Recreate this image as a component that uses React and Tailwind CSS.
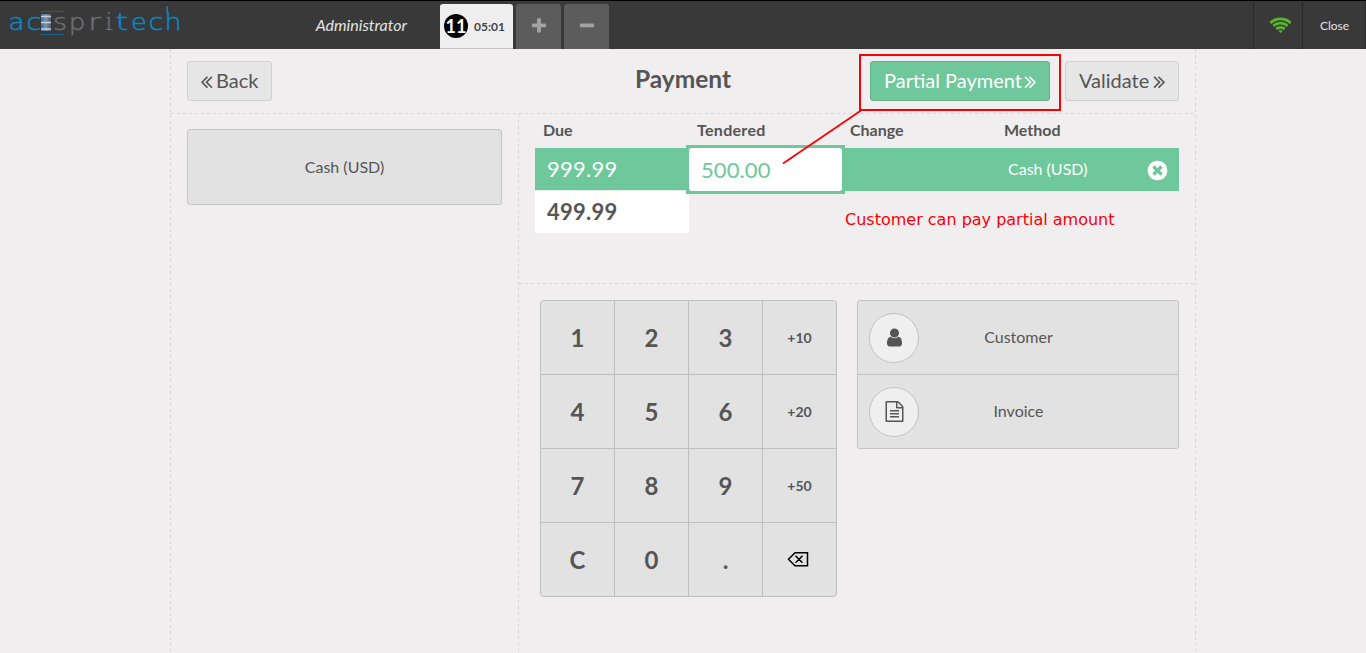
import React from "react";

const ICONS = {
  left: "M1011 1376q0 13-10 23l-50 50q-10 10-23 10t-23-10l-466-466q-10-10-10-23t10-23l466-466q10-10 23-10t23 10l50 50q10 10 10 23t-10 23l-393 393 393 393q10 10 10 23zm384 0q0 13-10 23l-50 50q-10 10-23 10t-23-10l-466-466q-10-10-10-23t10-23l466-466q10-10 23-10t23 10l50 50q10 10 10 23t-10 23l-393 393 393 393q10 10 10 23z",
  right: "M979 960q0 13-10 23l-466 466q-10 10-23 10t-23-10l-50-50q-10-10-10-23t10-23l393-393-393-393q-10-10-10-23t10-23l50-50q10-10 23-10t23 10l466 466q10 10 10 23zm384 0q0 13-10 23l-466 466q-10 10-23 10t-23-10l-50-50q-10-10-10-23t10-23l393-393-393-393q-10-10-10-23t10-23l50-50q10-10 23-10t23 10l466 466q10 10 10 23z",
  user: "M1536 1399q0 109-62.5 187t-150.5 78h-854q-88 0-150.5-78t-62.5-187q0-85 8.5-160.5t31.5-152 58.5-131 94-89 134.5-34.5q131 128 313 128t313-128q76 0 134.5 34.5t94 89 58.5 131 31.5 152 8.5 160.5zm-256-887q0 159-112.5 271.5t-271.5 112.5-271.5-112.5-112.5-271.5 112.5-271.5 271.5-112.5 271.5 112.5 112.5 271.5z",
  file: "M1596 380q28 28 48 76t20 88v1152q0 40-28 68t-68 28h-1344q-40 0-68-28t-28-68v-1600q0-40 28-68t68-28h896q40 0 88 20t76 48zm-444-244v376h376q-10-29-22-41l-313-313q-12-12-41-22zm384 1528v-1024h-416q-40 0-68-28t-28-68v-416h-768v1536h1280zm-1024-864q0-14 9-23t23-9h704q14 0 23 9t9 23v64q0 14-9 23t-23 9h-704q-14 0-23-9t-9-23v-64zm736 224q14 0 23 9t9 23v64q0 14-9 23t-23 9h-704q-14 0-23-9t-9-23v-64q0-14 9-23t23-9h704zm0 256q14 0 23 9t9 23v64q0 14-9 23t-23 9h-704q-14 0-23-9t-9-23v-64q0-14 9-23t23-9h704z",
  remove: "M1277 1122q0-26-19-45l-181-181 181-181q19-19 19-45 0-27-19-46l-90-90q-19-19-46-19-26 0-45 19l-181 181-181-181q-19-19-45-19-27 0-46 19l-90 90q-19 19-19 46 0 26 19 45l181 181-181 181q-19 19-19 45 0 27 19 46l90 90q19 19 46 19 26 0 45-19l181-181 181 181q19 19 45 19 27 0 46-19l90-90q19-19 19-46zm387-226q0 209-103 385.5t-279.5 279.5-385.5 103-385.5-103-279.5-279.5-103-385.5 103-385.5 279.5-279.5 385.5-103 385.5 103 279.5 279.5 103 385.5z",
  wifi: "M1024 1523q-20 0-93-73.5t-73-93.5q0-32 62.5-54t103.5-22 103.5 22 62.5 54q0 20-73 93.5t-93 73.5zm270-271q-2 0-40-25t-101.5-50-128.5-25-128.5 25-101 50-40.5 25q-18 0-93.5-75t-75.5-93q0-13 10-23 78-77 196-121t233-44 233 44 196 121q10 10 10 23 0 18-75.5 93t-93.5 75zm273-272q-11 0-23-8-136-105-252-154.5t-268-49.5q-85 0-170.5 22t-149 53-113.5 62-79 53-31 22q-17 0-92-75t-75-93q0-12 10-22 132-132 320-205t380-73 380 73 320 205q10 10 10 22 0 18-75 93t-92 75zm271-271q-11 0-22-9-179-157-371.5-236.5t-420.5-79.5-420.5 79.5-371.5 236.5q-11 9-22 9-17 0-92.5-75t-75.5-93q0-13 10-23 187-186 445-288t527-102 527 102 445 288q10 10 10 23 0 18-75.5 93t-92.5 75z",
  plus: "M1600 736v192q0 40-28 68t-68 28h-416v416q0 40-28 68t-68 28h-192q-40 0-68-28t-28-68v-416h-416q-40 0-68-28t-28-68v-192q0-40 28-68t68-28h416v-416q0-40 28-68t68-28h192q40 0 68 28t28 68v416h416q40 0 68 28t28 68z",
  minus: "M1600 736v192q0 40-28 68t-68 28h-1216q-40 0-68-28t-28-68v-192q0-40 28-68t68-28h1216q40 0 68 28t28 68z",
};

function Icon({ name, viewBox = "0 0 1792 1792", className }) {
  return (
    <svg viewBox={viewBox} fill="currentColor" className={className} aria-hidden="true">
      <path d={ICONS[name]} />
    </svg>
  );
}

const BLUE = "#0a87c4";
const GREY = "#6c6e72";
const LETTERS = [
  ["a", 16.5, 1.12, BLUE], ["c", 34, 1.15, BLUE], ["s", 60, 1.15, GREY], ["p", 77, 1.12, GREY], ["r", 94.5, 1.3, GREY],
  ["i", 109, 1, GREY], ["t", 122, 1.4, BLUE], ["e", 139, 1.1, BLUE], ["c", 156, 1.15, BLUE], ["h", 173, 1.15, BLUE],
];

function Logo() {
  return (
    <svg width="190" height="48" viewBox="0 0 190 48" className="shrink-0 font-['DejaVu_Sans',sans-serif] text-[23.5px] font-extralight">
      <defs>
        <linearGradient id="bar" x1="0" x2="1">
          <stop offset="0" stopColor="#2a6fa8" />
          <stop offset="0.5" stopColor="#7d95ad" />
          <stop offset="1" stopColor="#4a5866" />
        </linearGradient>
      </defs>
      {LETTERS.map(([ch, x, sx, color]) => (
        <text key={x} textAnchor="middle" fill={color} stroke={color} strokeWidth="0.5" transform={`translate(${x} 28.5) scale(${sx} 1)`}>{ch}</text>
      ))}
      <path d="M106.5 16.5H109M106 28.5h6.5" stroke={GREY} />
      <path d="M167.3 5v8" stroke={BLUE} strokeWidth="1.4" />
      <path d="M41 10.5h23M41 33.5h23" stroke="#14638c" />
      <path d="M41 13h10v17H41z" fill="url(#bar)" />
      <path d="M41 15.5h10M41 21.5h10M41 28h10" stroke="#c9ced3" strokeWidth="1.4" />
    </svg>
  );
}

function Header() {
  return (
    <header className="flex h-[49px] border-t border-black bg-[#393939] text-[#e4e4e4]">
      <Logo />
      <div className="w-[250px] pt-3 pr-[33px] text-right text-[16px] leading-[24px] italic">Administrator</div>
      <div className="flex gap-[3px] pt-[3px]">
        <div className="flex w-[73px] items-center rounded-t-[3px] border-b border-[#c4c4c4] bg-[#eeeeee] pl-1 font-bold">
          <span className="flex size-6 items-center justify-center rounded-full bg-black pt-px text-[18px] text-white">11</span>
          <span className="ml-[6px] pt-px text-[12px] text-[#444444]">05:01</span>
        </div>
        <div className="flex w-[45px] items-center justify-center rounded-t-[3px] bg-[#5c5c5c] text-[#a3a3a3]">
          <Icon name="plus" className="mb-px size-[18px]" />
        </div>
        <div className="flex w-[45px] items-center justify-center rounded-t-[3px] bg-[#5c5c5c] text-[#a3a3a3]">
          <Icon name="minus" className="mb-px size-[18px]" />
        </div>
      </div>
      <div className="ml-auto flex">
        <div className="flex w-[49px] items-center justify-center border-l border-[#2b2b2b] pl-[4px]">
          <Icon name="wifi" viewBox="0 0 2048 1792" className="mt-px h-[20px] w-[23px] text-[#5ab534]" />
        </div>
        <div className="flex w-[64px] items-center justify-center border-x border-[#2b2b2b] pt-[2px] pl-px text-[12px]">Close</div>
      </div>
    </header>
  );
}

function DashH() {
  return <div className="h-px w-full shrink-0 bg-[repeating-linear-gradient(90deg,#d6d6d6_0_3px,transparent_3px_6px)]" />;
}

function DashV() {
  return <div className="w-px shrink-0 bg-[repeating-linear-gradient(180deg,#d6d6d6_0_3px,transparent_3px_6px)]" />;
}

const KEYS = ["1", "2", "3", "+10", "4", "5", "6", "+20", "7", "8", "9", "+50", "C", "0", ".", "del"];

function Keypad() {
  return (
    <div className="grid h-[297px] w-[297px] grid-cols-4 gap-px overflow-hidden rounded-[4px] border border-[#bfbfbf] bg-[#bfbfbf] font-bold">
      {KEYS.map((k) => (
        <button key={k} className={k.startsWith("+") ? "bg-[#e2e2e2] text-[14px]" : "flex items-center justify-center bg-[#e2e2e2] pt-px text-[24px]"}>
          {k === "del" ? (
            <svg width="22" height="16" viewBox="0 0 22 16" fill="none" stroke="#000" strokeWidth="1.5" className="mr-[3px] mb-[2px]">
              <path d="M8 1.75H20.5V14.75H8L1.5 8.25zM8.5 4.75l7 7M15.5 4.75l-7 7" />
            </svg>
          ) : (
            k
          )}
        </button>
      ))}
    </div>
  );
}

function OptionButton({ icon, label, iconClass, first }) {
  return (
    <button className={first ? "flex h-[73px] items-center bg-[#e2e2e2] pl-[11px]" : "flex h-[74px] items-center border-t border-[#c2c2c2] bg-[#e2e2e2] pl-[11px]"}>
      <span className="flex size-[50px] items-center justify-center rounded-full border border-[#c2c2c2] bg-[#efefef]">
        <Icon name={icon} className={iconClass} />
      </span>
      <span className="w-[199px] pb-[2px] text-center text-[16px]">{label}</span>
    </button>
  );
}

function PaymentLines() {
  return (
    <div className="h-[169px] px-4">
      <div className="grid h-[34px] grid-cols-[154px_153px_154px_1fr] pl-2 text-[16px] leading-[31px] font-bold">
        <span>Due</span>
        <span className="tracking-[0.3px]">Tendered</span>
        <span>Change</span>
        <span>Method</span>
      </div>
      <div className="flex h-[43px] bg-[#6ec89b] text-white">
        <div className="w-[154px] border-b border-[#e3efe8] pl-3 text-[22px] leading-[42px] tracking-[0.25px]">999.99</div>
        <div className="relative -m-[3px] w-[159px] bg-[#6ec89b] p-[3px]">
          <div className="h-[43px] rounded-[3px] bg-white pl-3 text-[22px] leading-[44px] tracking-[0.1px] text-[#6ec89b]">500.00</div>
        </div>
        <div className="w-[154px]" />
        <div className="flex flex-1 items-center justify-between pr-[10px] pl-3 text-[16px]">
          <span className="pb-[2px]">Cash (USD)</span>
          <Icon name="remove" className="mt-[2px] size-[23px]" />
        </div>
      </div>
      <div className="h-[42px] w-[154px] bg-white pl-3 text-[22px] leading-[41px] font-bold tracking-[0.25px]">499.99</div>
    </div>
  );
}

function TopBar() {
  return (
    <div className="grid h-[64px] grid-cols-[1fr_auto_1fr] px-4 pt-3">
      <button className="flex h-10 w-[85px] items-center rounded-[3px] border border-[#cfd0d0] bg-[#e6e6e6] pb-[2px] pl-[8px] text-[20px]">
        <Icon name="left" className="mt-[2px] -mr-px size-[21px]" />
        Back
      </button>
      <h1 className="text-[24.5px] leading-[36px] font-bold">Payment</h1>
      <div className="flex justify-end gap-[15px]">
        <button className="flex h-10 w-[180px] items-center rounded-[3px] border border-[#64af8a] bg-[#6ec89b] pb-[2px] pl-[13px] text-[20px] whitespace-nowrap text-white">
          Partial Payment
          <Icon name="right" className="mt-[2px] -ml-[2px] size-[21px]" />
        </button>
        <button className="flex h-10 w-[114px] items-center rounded-[3px] border border-[#cfd0d0] bg-[#e6e6e6] pb-[2px] pl-[13px] text-[20px]">
          Validate
          <Icon name="right" className="mt-[2px] size-[21px]" />
        </button>
      </div>
    </div>
  );
}

export default function App() {
  return (
    <div className="relative flex h-[653px] w-[1366px] flex-col overflow-hidden bg-[#f0eeee] font-['Lato',sans-serif] text-[#555555]">
      <Header />
      <main className="ml-[170px] flex w-[1026px] flex-1">
        <DashV />
        <div className="flex flex-1 flex-col">
          <TopBar />
          <DashH />
          <div className="flex flex-1">
            <section className="w-[347px] px-4 pt-[15px]">
              <button className="h-[76px] w-full rounded-[3px] border border-[#c6c6c6] bg-[#e2e2e2] text-[16px]">Cash (USD)</button>
            </section>
            <DashV />
            <section className="flex-1">
              <PaymentLines />
              <DashH />
              <div className="flex items-start gap-5 pt-4 pl-[21px]">
                <Keypad />
                <div className="flex w-[322px] flex-col overflow-hidden rounded-[3px] border border-[#c2c2c2]">
                  <OptionButton first icon="user" label="Customer" iconClass="size-[21px]" />
                  <OptionButton icon="file" label="Invoice" iconClass="size-[21px]" />
                </div>
              </div>
            </section>
          </div>
        </div>
        <DashV />
      </main>
      <div className="absolute top-[54px] left-[859px] h-[57px] w-[202px] border-2 border-[#fb0007]" />
      <svg className="absolute top-[109px] left-[781px]" width="82" height="57" viewBox="0 0 82 57">
        <path d="M80 1.5L2 54.5" stroke="#fb0007" strokeWidth="1.8" />
      </svg>
      <p className="absolute top-[208px] left-[845px] font-['DejaVu_Sans'] text-[16px] leading-[24px] whitespace-nowrap text-[#fb0007]">Customer can pay partial amount</p>
    </div>
  );
}
